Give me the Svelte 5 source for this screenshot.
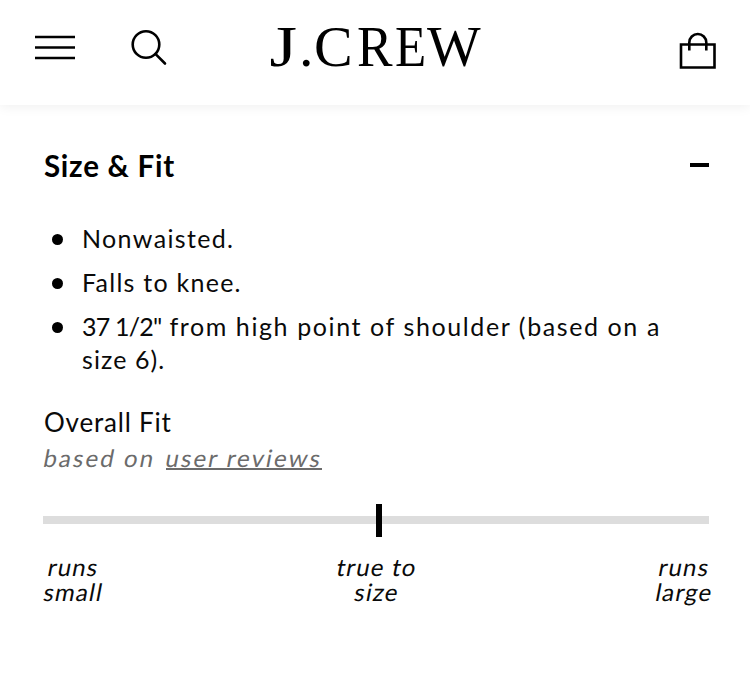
<script>
  const bullets = [
    [[{ text: 'Nonwaisted.', spacing: 1.35 }]],
    [[{ text: 'Falls to knee.', spacing: 1.25 }]],
    [
      [
        { text: '37 1/2"', spacing: -0.8 },
        { text: ' from high point of shoulder (based on a', spacing: 1.6 }
      ],
      [{ text: 'size 6).', spacing: 1.1 }]
    ]
  ];
  const fit = 50.4;
</script>

<div class="page">
  <header>
    <button class="menu" aria-label="Menu">
      <svg width="42" height="28" viewBox="0 0 42 28"><path d="M1 4h40M1 14.5h40M1 25h40" /></svg>
    </button>
    <button class="search" aria-label="Search">
      <svg width="38" height="38" viewBox="0 0 38 38"><circle cx="16" cy="15.5" r="13.3" /><path d="M25.4 24.9L35 34.5" /></svg>
    </button>
    <svg class="logo" width="220" height="74" viewBox="0 0 220 74" role="img" aria-label="J.CREW">
      <g font-size="58">
        <text transform="translate(3.5 56) scale(1.22 1)">J</text>
        <text x="33" y="56">.</text>
        <text transform="translate(48 56) scale(1 1)">C</text>
        <text transform="translate(91 56) scale(.92 1)">R</text>
        <text transform="translate(129 56) scale(.88 1)">E</text>
        <text transform="translate(161 56) scale(.98 1)">W</text>
      </g>
    </svg>
    <button class="bag" aria-label="Shopping bag">
      <svg width="38" height="40" viewBox="0 0 38 40"><path d="M2 14.5h33.5v23H2zM10.3 20.5v-8a8.5 8.5 0 0 1 17 0v8" /></svg>
    </button>
  </header>

  <main>
    <div class="title"><h2>Size &amp; Fit</h2><span class="minus"></span></div>
    <ul>
      {#each bullets as lines}
        <li>
          {#each lines as line}
            <span class="line">{#each line as run}<span style="letter-spacing: {run.spacing}px">{run.text}</span>{/each}</span>
          {/each}
        </li>
      {/each}
    </ul>
    <h3>Overall Fit</h3>
    <p class="reviews"><span class="slant">based on</span><a href="#reviews"><span class="slant">user reviews</span></a></p>
    <div class="track"><span class="marker" style="left: {fit}%"></span></div>
    <div class="labels">
      <div><span class="slant">runs</span><span class="slant">small</span></div>
      <div><span class="slant">true to</span><span class="slant">size</span></div>
      <div><span class="slant">runs</span><span class="slant">large</span></div>
    </div>
  </main>
</div>

<style>
  :global(body) { background: #fff; }
  .page {
    width: 750px;
    height: 684px;
    overflow: hidden;
    background: #fff;
    color: #0a0a0a;
    font-family: Lato, "Open Sans", sans-serif;
  }
  header {
    display: flex;
    align-items: flex-start;
    height: 105px;
    box-sizing: border-box;
    padding-left: 34px;
    box-shadow: 0 1px 12px rgba(0, 0, 0, 0.07);
  }
  button { padding: 0; border: 0; background: none; display: block; }
  button svg { display: block; fill: none; stroke: #000; stroke-width: 2.6; }
  .menu { margin-top: 33px; }
  .search { margin: 29px 0 0 54px; }
  .search svg { stroke-linecap: round; }
  .logo { margin: 10px 0 0 98px; overflow: visible; font-family: "Liberation Serif", serif; fill: #000; }
  .bag { margin: 30px 0 0 192px; }
  .bag svg { margin-left: 1px; }
  main { padding: 43px 41px 0 43px; }
  .title { display: flex; align-items: center; justify-content: space-between; height: 34px; }
  h2 { margin: 1px 0 0 1px; font-size: 29.5px; line-height: 34px; font-weight: 700; letter-spacing: 0.75px; color: #000; }
  .minus { width: 19px; height: 4px; background: #000; }
  ul { list-style: none; margin: 40px 0 0; padding: 0; }
  li { position: relative; padding-left: 39px; margin-bottom: 11px; font-size: 25px; line-height: 33px; }
  li::before { content: ""; position: absolute; left: 9px; top: 12px; width: 11px; height: 11px; border-radius: 50%; background: #000; }
  .line { display: block; white-space: pre; }
  h3 { margin: 29px 0 0 1px; font-size: 26px; line-height: 34px; font-weight: 400; letter-spacing: 0.8px; }
  .slant { display: block; transform: skewX(-11deg); }
  .reviews { display: flex; gap: 10px; margin: 2px 0 0 1px; font-size: 24px; line-height: 33px; letter-spacing: 2.1px; color: #6b6b6b; white-space: nowrap; }
  a { height: 27px; border-bottom: 2px solid #6b6b6b; color: inherit; text-decoration: none; }
  .track { position: relative; width: 666px; height: 8px; margin-top: 42px; background: #ddd; }
  .marker { position: absolute; top: -12px; width: 6px; height: 33px; margin-left: -3px; background: #000; }
  .labels { display: flex; justify-content: space-between; margin: 30px -4px 0 1px; font-size: 24px; line-height: 25px; text-align: center; letter-spacing: 1.2px; white-space: nowrap; }
  .labels div:nth-child(2) { margin-right: 5px; }
</style>
